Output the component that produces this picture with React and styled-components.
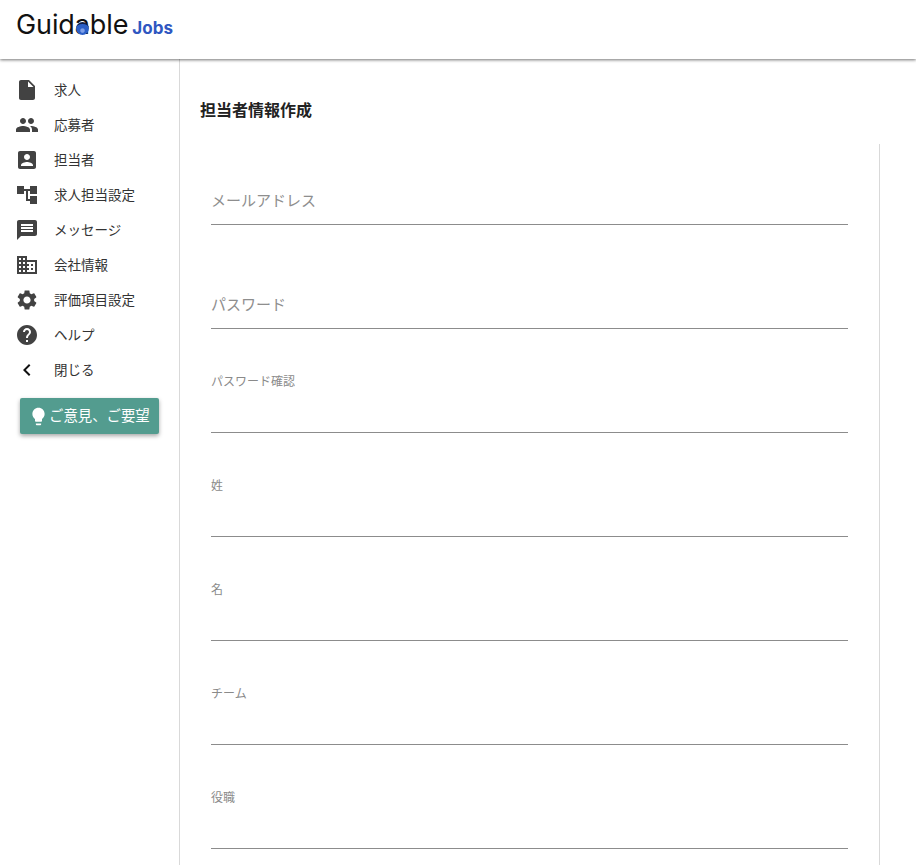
import React from "react";
import styled, { createGlobalStyle } from "styled-components";

const fontFamily = "Roboto, 'Noto Sans CJK JP', sans-serif";
const colorIcon = "#424242";

const GlobalStyle = createGlobalStyle`
    html, body {
        margin: 0;
        height: 100%;
        overflow: hidden;
        background: #fff;
        font-family: ${fontFamily};
    }
`;

const Page = styled.div`
    display: flex;
    flex-direction: column;
    height: 100vh;
`;

const Header = styled.header`
    flex: none;
    height: 59px;
    display: flex;
    align-items: flex-start;
    padding: 8px 0 0 16px;
    box-sizing: border-box;
    background: #fff;
    box-shadow: 0 1px 3px rgba(0, 0, 0, 0.55);
    position: relative;
    z-index: 2;
`;

const Logo = styled.div`
    display: flex;
    align-items: baseline;
    gap: 4px;
`;

const LogoWord = styled.span`
    position: relative;
    font-family: "Inter", sans-serif;
    font-size: 27px;
    font-weight: 400;
    letter-spacing: -0.1px;
    color: #111;
`;

const LogoDot = styled.span`
    position: absolute;
    left: 60px;
    top: 14px;
    width: 13px;
    height: 13px;
    border-radius: 50%;
    background: radial-gradient(circle at 50% 60%, #7fa0e8 0 18%, #2b5fc7 30% 100%);
    border-top: 2px solid #10204a;
    box-sizing: border-box;
`;

const LogoJobs = styled.span`
    font-family: "Inter", sans-serif;
    font-size: 17px;
    font-weight: 700;
    color: #2f57c1;
`;

const Body = styled.div`
    flex: 1;
    display: flex;
    min-height: 0;
`;

const Sidebar = styled.nav`
    flex: none;
    width: 179px;
    border-right: 1px solid #d9d9d9;
    padding-top: 13px;
`;

const NavRow = styled.div`
    height: 35px;
    display: flex;
    align-items: center;
    padding-left: 15px;
    gap: 15px;
    font-size: 13.5px;
    color: #333;
`;

const NavLabel = styled.span`
    padding-bottom: 2px;
`;

const NavIcon = styled.svg`
    width: 24px;
    height: 24px;
    flex: none;
    fill: ${(props) => props.$color || colorIcon};
`;

const FeedbackButton = styled.button`
    display: flex;
    align-items: center;
    box-sizing: border-box;
    width: 139px;
    height: 36px;
    margin: 11px 0 0 20px;
    padding: 0 0 0 8px;
    border: none;
    border-radius: 2px;
    background: #539c8f;
    color: #fff;
    font-family: ${fontFamily};
    font-size: 14.4px;
    box-shadow: 0 2px 4px rgba(0, 0, 0, 0.35);
`;

const FeedbackLabel = styled.span`
    padding-bottom: 3px;
`;

const BulbIcon = styled.svg`
    width: 21px;
    height: 21px;
    fill: #fff;
    flex: none;
`;

const Main = styled.main`
    flex: 1;
    min-width: 0;
    display: flex;
    flex-direction: column;
    padding: 0 36px 0 20px;
`;

const Title = styled.h1`
    margin: 0;
    flex: none;
    height: 85px;
    box-sizing: border-box;
    padding-top: 15px;
    display: flex;
    align-items: center;
    font-size: 16px;
    font-weight: 700;
    color: #222;
`;

const FormPanel = styled.form`
    flex: 1;
    border-right: 1px solid #d9d9d9;
    padding: 0 31px 0 11px;
`;

const Field = styled.div`
    height: ${(props) => props.$height || 104}px;
    box-sizing: border-box;
    border-bottom: 1px solid #8c8c8c;
    display: flex;
    align-items: flex-end;
`;

const Placeholder = styled.label`
    font-size: 15px;
    color: #8e8e8e;
    padding-bottom: 15px;
    line-height: 1;
`;

const SmallLabel = styled.label`
    align-self: flex-start;
    margin-top: 47px;
    font-size: 12px;
    line-height: 1;
    color: #8a8a8a;
`;

const icons = {
    file: "M6 2c-1.1 0-1.99.9-1.99 2L4 20c0 1.1.89 2 1.99 2H18c1.1 0 2-.9 2-2V8l-6-6H6zm7 7V3.5L18.5 9H13z",
    people: "M16 11c1.66 0 2.99-1.34 2.99-3S17.66 5 16 5c-1.66 0-3 1.34-3 3s1.34 3 3 3zm-8 0c1.66 0 2.99-1.34 2.99-3S9.66 5 8 5C6.34 5 5 6.34 5 8s1.34 3 3 3zm0 2c-2.33 0-7 1.17-7 3.5V19h14v-2.5c0-2.33-4.67-3.5-7-3.5zm8 0c-.29 0-.62.02-.97.05 1.16.84 1.97 1.97 1.97 3.45V19h6v-2.5c0-2.33-4.67-3.5-7-3.5z",
    accountBox: "M3 5v14c0 1.1.89 2 2 2h14c1.1 0 2-.9 2-2V5c0-1.1-.9-2-2-2H5c-1.11 0-2 .9-2 2zm12 4c0 1.66-1.34 3-3 3s-3-1.34-3-3 1.34-3 3-3 3 1.34 3 3zm-9 8c0-2 4-3.1 6-3.1s6 1.1 6 3.1v1H6v-1z",
    tree: "M22 11V3h-7v3H9V3H2v8h7V8h2v10h4v3h7v-8h-7v3h-2V8h2v3z",
    message: "M20 2H4c-1.1 0-1.99.9-1.99 2L2 22l4-4h14c1.1 0 2-.9 2-2V4c0-1.1-.9-2-2-2zm-2 12H6v-2h12v2zm0-3H6V9h12v2zm0-3H6V6h12v2z",
    domain: "M12 7V3H2v18h20V7H12zM6 19H4v-2h2v2zm0-4H4v-2h2v2zm0-4H4V9h2v2zm0-4H4V5h2v2zm4 12H8v-2h2v2zm0-4H8v-2h2v2zm0-4H8V9h2v2zm0-4H8V5h2v2zm10 12h-8v-2h2v-2h-2v-2h2v-2h-2V9h8v10zm-2-8h-2v2h2v-2zm0 4h-2v2h2v-2z",
    settings: "M19.14 12.94c.04-.3.06-.61.06-.94 0-.32-.02-.64-.07-.94l2.03-1.58c.18-.14.23-.41.12-.61l-1.92-3.32c-.12-.22-.37-.29-.59-.22l-2.39.96c-.5-.38-1.03-.7-1.62-.94l-.36-2.54c-.04-.24-.24-.41-.48-.41h-3.84c-.24 0-.43.17-.47.41l-.36 2.54c-.59.24-1.13.57-1.62.94l-2.39-.96c-.22-.08-.47 0-.59.22L2.74 8.87c-.12.21-.08.47.12.61l2.03 1.58c-.05.3-.09.63-.09.94s.02.64.07.94l-2.03 1.58c-.18.14-.23.41-.12.61l1.92 3.32c.12.22.37.29.59.22l2.39-.96c.5.38 1.03.7 1.62.94l.36 2.54c.05.24.24.41.48.41h3.84c.24 0 .44-.17.47-.41l.36-2.54c.59-.24 1.13-.56 1.62-.94l2.39.96c.22.08.47 0 .59-.22l1.92-3.32c.12-.22.07-.47-.12-.61l-2.01-1.58zM12 15.6c-1.98 0-3.6-1.62-3.6-3.6s1.62-3.6 3.6-3.6 3.6 1.62 3.6 3.6-1.62 3.6-3.6 3.6z",
    help: "M12 2C6.48 2 2 6.48 2 12s4.48 10 10 10 10-4.48 10-10S17.52 2 12 2zm1 17h-2v-2h2v2zm2.07-7.75l-.9.92C13.45 12.9 13 13.5 13 15h-2v-.5c0-1.1.45-2.1 1.17-2.83l1.24-1.26c.37-.36.59-.86.59-1.41 0-1.1-.9-2-2-2s-2 .9-2 2H8c0-2.21 1.79-4 4-4s4 1.79 4 4c0 .88-.36 1.68-.93 2.25z",
    chevron: "M15.41 7.41L14 6l-6 6 6 6 1.41-1.41L10.83 12z",
    bulb: "M9 21c0 .55.45 1 1 1h4c.55 0 1-.45 1-1v-1H9v1zm3-19C8.14 2 5 5.14 5 9c0 2.38 1.19 4.47 3 5.74V17c0 .55.45 1 1 1h6c.55 0 1-.45 1-1v-2.26c1.81-1.27 3-3.36 3-5.74 0-3.86-3.14-7-7-7z",
};

const navItems = [
    { icon: "file", label: "求人" },
    { icon: "people", label: "応募者" },
    { icon: "accountBox", label: "担当者" },
    { icon: "tree", label: "求人担当設定" },
    { icon: "message", label: "メッセージ" },
    { icon: "domain", label: "会社情報" },
    { icon: "settings", label: "評価項目設定" },
    { icon: "help", label: "ヘルプ" },
    { icon: "chevron", label: "閉じる", color: "#111" },
];

const smallFields = ["パスワード確認", "姓", "名", "チーム", "役職"];

function App() {
    return (
        <Page>
            <GlobalStyle />
            <Header>
                <Logo>
                    <LogoWord>
                        Guidable
                        <LogoDot />
                    </LogoWord>
                    <LogoJobs>Jobs</LogoJobs>
                </Logo>
            </Header>
            <Body>
                <Sidebar>
                    {navItems.map((item) => (
                        <NavRow key={item.label}>
                            <NavIcon viewBox="0 0 24 24" $color={item.color}>
                                <path d={icons[item.icon]} />
                            </NavIcon>
                            <NavLabel>{item.label}</NavLabel>
                        </NavRow>
                    ))}
                    <FeedbackButton type="button">
                        <BulbIcon viewBox="0 0 24 24">
                            <path d={icons.bulb} />
                        </BulbIcon>
                        <FeedbackLabel>ご意見、ご要望</FeedbackLabel>
                    </FeedbackButton>
                </Sidebar>
                <Main>
                    <Title>担当者情報作成</Title>
                    <FormPanel>
                        <Field $height={81}>
                            <Placeholder>メールアドレス</Placeholder>
                        </Field>
                        <Field>
                            <Placeholder>パスワード</Placeholder>
                        </Field>
                        {smallFields.map((label) => (
                            <Field key={label}>
                                <SmallLabel>{label}</SmallLabel>
                            </Field>
                        ))}
                    </FormPanel>
                </Main>
            </Body>
        </Page>
    );
}

export default App;
